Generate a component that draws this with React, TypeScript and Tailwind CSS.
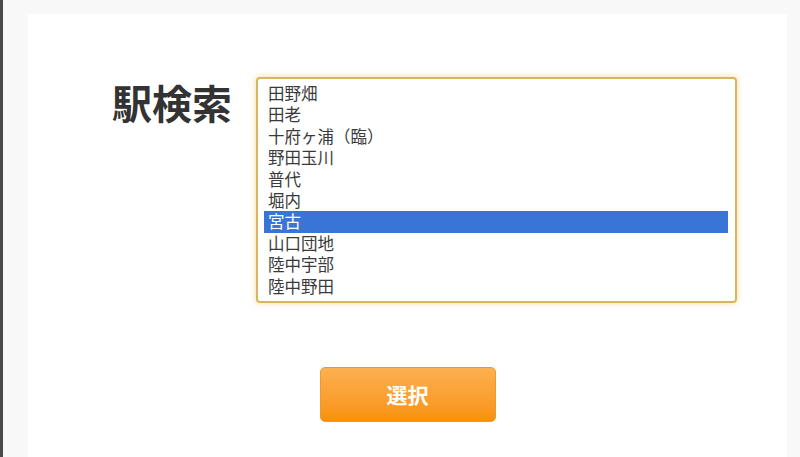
import React from "react";

const stations = [
  "田野畑",
  "田老",
  "十府ヶ浦（臨）",
  "野田玉川",
  "普代",
  "堀内",
  "宮古",
  "山口団地",
  "陸中宇部",
  "陸中野田",
];

const App = () => {
  const [selected, setSelected] = React.useState(6);

  return (
    <div
      className="flex h-[457px] w-full overflow-hidden bg-[#f8f8f8]"
      style={{ fontFamily: '"Noto Sans CJK JP", "Noto Sans", sans-serif' }}
    >
      <div className="w-[3px] shrink-0 bg-[#4a4a4a]" />
      <div className="ml-[25px] mr-[13px] mt-[14px] flex flex-1 flex-col bg-white">
        <div className="mt-[63px] flex items-start">
          <h1 className="ml-[84px] mt-[1px] w-[144px] shrink-0 text-[40px] font-bold leading-[48px] text-[#333]">
            駅検索
          </h1>
          <div className="h-[226px] w-[481px] rounded-[4px] border-2 border-[#d9b463] bg-white pl-[6px] pr-[7px] pt-[4px] shadow-[0_0_6px_rgba(236,190,90,0.6)]">
            {stations.map((s, i) => (
              <div
                key={s}
                onClick={() => setSelected(i)}
                className={
                  i === selected
                    ? "h-[21.4px] bg-[#3875d7] pl-[4px] text-[16.5px] leading-[21.4px] text-white"
                    : "h-[21.4px] pl-[4px] text-[16.5px] leading-[21.4px] text-[#3a3a3a]"
                }
              >
                {s}
              </div>
            ))}
          </div>
        </div>
        <div className="mt-[64px] flex justify-center">
          <button className="h-[55px] w-[176px] rounded-[5px] border border-[#eb9a2c] bg-gradient-to-b from-[#fcb04f] to-[#f89200] text-[21px] font-semibold text-white">
            選択
          </button>
        </div>
      </div>
    </div>
  );
};

export default App;
